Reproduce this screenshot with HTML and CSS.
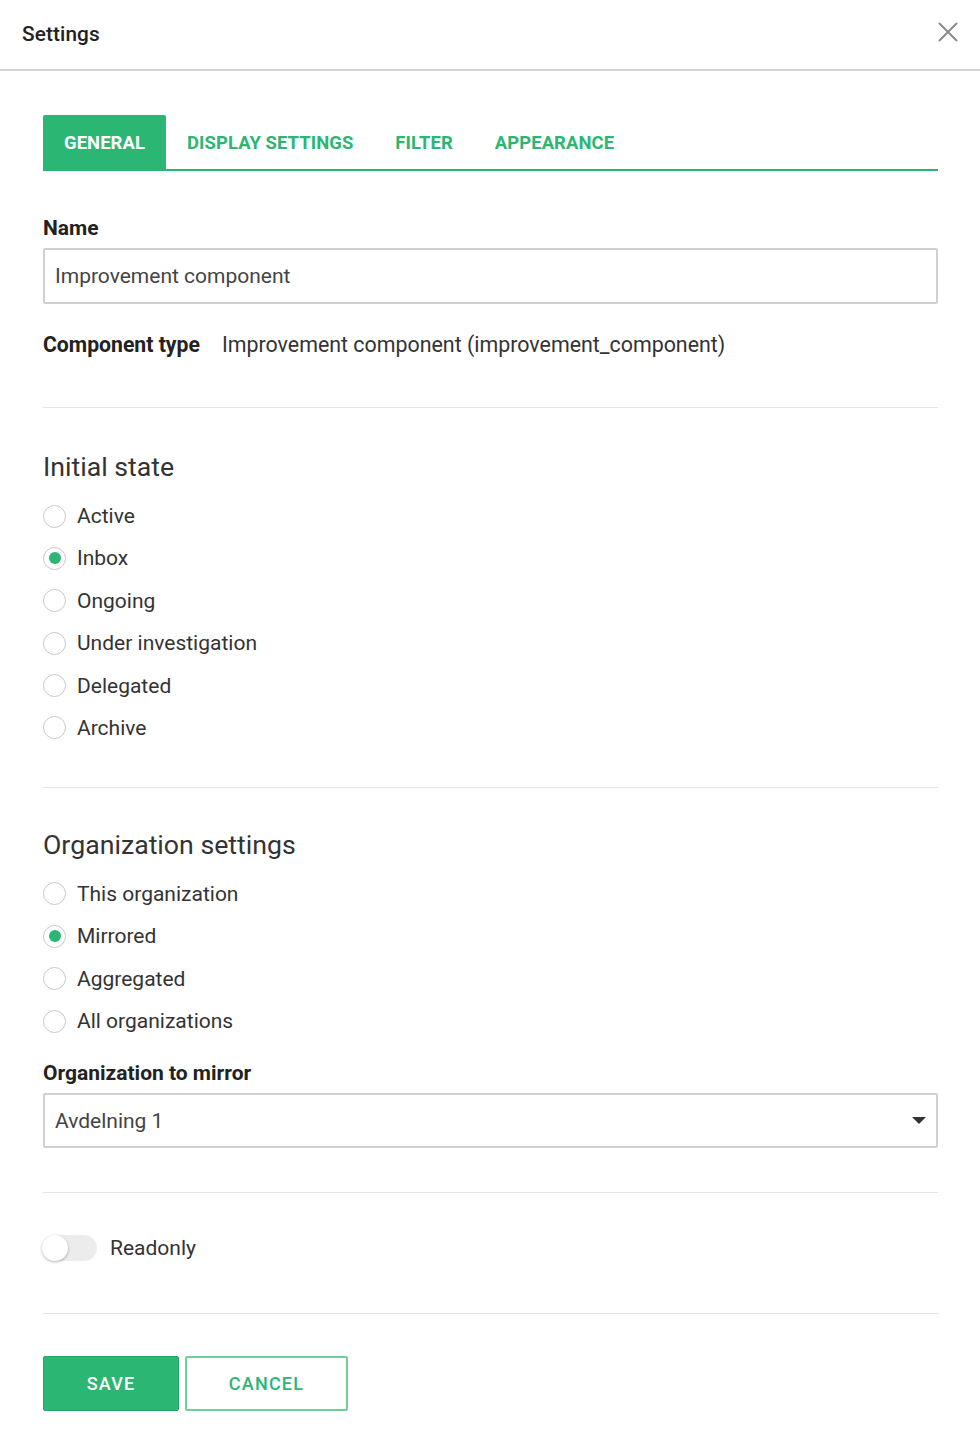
FILE: index.html
```html
<!DOCTYPE html>
<html>
<head>
<meta charset="utf-8">
<link rel="stylesheet" href="styles.css">
</head>
<body>
<div class="dialog">
  <header class="header">
    <h1 class="title">Settings</h1>
    <svg class="close" width="22" height="22" viewBox="0 0 22 22"><path d="M2 2 L20 20 M20 2 L2 20" stroke="#8a8a8a" stroke-width="2" fill="none"/></svg>
  </header>
  <main class="content">
    <nav class="tabs">
      <div class="tab active">GENERAL</div>
      <div class="tab">DISPLAY SETTINGS</div>
      <div class="tab">FILTER</div>
      <div class="tab">APPEARANCE</div>
    </nav>

    <div class="field">
      <label class="label">Name</label>
      <div class="input">Improvement component</div>
    </div>

    <div class="typerow">
      <span class="typelabel">Component type</span>
      <span class="typevalue">Improvement component (improvement_component)</span>
    </div>

    <hr class="divider">

    <section class="section">
      <h2 class="heading">Initial state</h2>
      <div class="radios">
        <div class="radio"><span class="dot"></span>Active</div>
        <div class="radio"><span class="dot on"></span>Inbox</div>
        <div class="radio"><span class="dot"></span>Ongoing</div>
        <div class="radio"><span class="dot"></span>Under investigation</div>
        <div class="radio"><span class="dot"></span>Delegated</div>
        <div class="radio"><span class="dot"></span>Archive</div>
      </div>
    </section>

    <hr class="divider d2">

    <section class="section s2">
      <h2 class="heading">Organization settings</h2>
      <div class="radios">
        <div class="radio"><span class="dot"></span>This organization</div>
        <div class="radio"><span class="dot on"></span>Mirrored</div>
        <div class="radio"><span class="dot"></span>Aggregated</div>
        <div class="radio"><span class="dot"></span>All organizations</div>
      </div>
      <div class="field f2">
        <label class="label">Organization to mirror</label>
        <div class="input select">Avdelning 1<svg class="caret" width="14" height="8" viewBox="0 0 14 8"><path d="M0 0 H14 L7 7 Z" fill="#333"/></svg></div>
      </div>
    </section>

    <hr class="divider d3">

    <div class="toggle-row">
      <span class="toggle"><span class="knob"></span></span>
      <span class="toggle-label">Readonly</span>
    </div>

    <hr class="divider d4">

    <div class="buttons">
      <button class="btn save">SAVE</button>
      <button class="btn cancel">CANCEL</button>
    </div>
  </main>
</div>
</body>
</html>
```
FILE: styles.css
```css
* { box-sizing: border-box; }
html, body { margin: 0; padding: 0; background: #fff; }
body { font-family: Roboto, "Noto Sans", sans-serif; color: #333; }

.header {
  height: 71px;
  border-bottom: 2px solid #d3d3d3;
  display: flex;
  align-items: center;
  justify-content: space-between;
  padding: 0 22px 2px 22px;
}
.title { margin: 0; font-size: 20.8px; font-weight: 500; color: #222; letter-spacing: 0.1px; }
.close { margin-right: -1px; margin-top: -4px; }

.content { padding: 44px 42px 0 43px; }

.tabs {
  display: flex;
  border-bottom: 2px solid #2bb673;
  height: 56px;
}
.tab {
  padding: 0 21px;
  display: flex; align-items: center;
  font-size: 18.4px; font-weight: 700; color: #2bb673;
  letter-spacing: 0.1px;
}
.tab.active { background: #2bb673; color: #fff; border-radius: 2px 2px 0 0; }

.field { margin-top: 47px; }
.label { display: block; font-size: 21px; font-weight: 700; color: #222; margin-bottom: 9px; line-height: 21px; }
.input {
  height: 56px;
  border: 2px solid #d0d0d0;
  border-radius: 2px;
  padding: 0 10px;
  display: flex; align-items: center;
  font-size: 21px; color: #444;
}
.select { justify-content: space-between; padding-right: 10px; height: 55px; }

.typerow { margin-top: 29px; display: flex; gap: 22px; font-size: 21.4px; line-height: 24px; }
.typelabel { font-weight: 700; color: #222; font-size: 21.2px; }
.typevalue { color: #333; }

.divider { border: 0; border-top: 1px solid #e4e4e4; margin: 50px 0 0 0; }

.section { margin-top: 43px; }
.s2 { margin-top: 41px; }
.heading { margin: 0 0 21px 0; font-size: 26.7px; font-weight: 400; color: #333; line-height: 32px; }

.radios { display: flex; flex-direction: column; gap: 18.4px; }
.radio { display: flex; align-items: center; font-size: 21px; color: #333; line-height: 24px; gap: 11px; }
.dot {
  width: 23px; height: 23px; border-radius: 50%;
  border: 1.5px solid #c8c8c8; background: #fff;
  position: relative; flex: none;
}
.dot.on::after {
  content: ""; position: absolute; left: 50%; top: 50%;
  width: 12px; height: 12px; margin: -6px 0 0 -6px;
  border-radius: 50%; background: #2bb673;
}

.d2 { margin-top: 47px; }
.f2 { margin-top: 30px; }
.d3 { margin-top: 44px; }

.toggle-row { margin-top: 42px; display: flex; align-items: center; gap: 13px; }
.toggle {
  width: 54px; height: 26px; border-radius: 13px; background: #ececec;
  position: relative; display: block;
}
.knob {
  position: absolute; left: -1px; top: 0; width: 26px; height: 26px; border-radius: 50%;
  background: #fff; box-shadow: 0 1px 3px rgba(0,0,0,0.3);
}
.toggle-label { font-size: 21px; color: #333; }

.d4 { margin-top: 52px; }

.buttons { margin-top: 42px; display: flex; gap: 6px; }
.btn {
  height: 55px; font-family: Roboto, sans-serif; font-size: 18px; font-weight: 500;
  letter-spacing: 1.2px; border-radius: 2px; cursor: pointer;
}
.save { width: 136px; background: #2bb673; color: #fff; border: 1px solid #25a866; }
.cancel { width: 163px; background: #fff; color: #2bb673; border: 2px solid #6fcf9b; }
```
